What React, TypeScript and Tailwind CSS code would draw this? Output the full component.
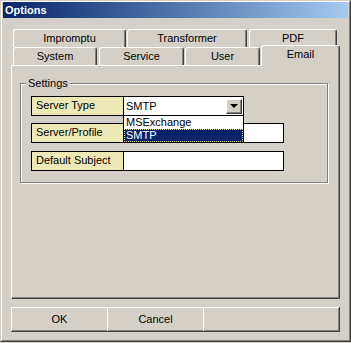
const tabBase =
  "flex items-center justify-center bg-[#d4d0c8] border-l border-t border-r border-l-white border-t-white border-r-[#404040] rounded-t-[3px] shadow-[inset_-1px_0_0_#808080] text-[11px] leading-[13px]";

const Row = ({ label, children }: { label: string; children: React.ReactNode }) => (
    <div className="flex h-[20px]">
        <div className="w-[92px] h-[20px] border-l border-t border-b border-black bg-[#ece9b6] pl-[4px] pt-[2px] text-[11px] leading-[13px]">
            {label}
        </div>
        {children}
    </div>
);

export default function App() {
    return (
        <div className="h-[343px] w-[351px] bg-[#d4d0c8] font-['Liberation_Sans',Arial,sans-serif] text-black">
            <div className="h-[342px] w-[351px] border border-t-[#d4d0c8] border-l-[#d4d0c8] border-b-[#404040] border-r-[#404040]">
                <div className="h-full w-full border border-t-white border-l-white border-b-[#808080] border-r-[#808080] px-[1px]">
                    {/* title bar */}
                    <div className="flex h-[16px] items-center bg-linear-to-r from-[#0a246a] to-[#a6caf0] pl-[2px] text-[11px] font-bold text-white">
                        Options
                    </div>

                    <div className="pl-[8px]">
                        {/* tabs back row */}
                        <div className="mt-[11px] flex pl-[2px]">
                            <div className={`${tabBase} h-[18px] w-[113px]`}>Impromptu</div>
                            <div className={`${tabBase} ml-[1px] h-[18px] w-[120px]`}>Transformer</div>
                            <div className={`${tabBase} ml-[2px] h-[18px] w-[88px]`}>PDF</div>
                        </div>
                        {/* tabs front row */}
                        <div className="-mt-[2px] flex h-[20px] items-end pl-[2px]">
                            <div className={`${tabBase} h-[18px] w-[84px]`}>System</div>
                            <div className={`${tabBase} ml-[2px] h-[18px] w-[85px]`}>Service</div>
                            <div className={`${tabBase} ml-[1px] h-[18px] w-[75px]`}>User</div>
                            <div className="relative z-10 -mb-[1px] ml-[1px] flex h-[21px] w-[79px] items-start justify-center rounded-t-[3px] border-l border-t border-r border-l-white border-t-white border-r-[#404040] bg-[#d4d0c8] pt-[2px] text-[11px] leading-[13px] shadow-[inset_-1px_0_0_#808080]">
                                Email
                            </div>
                        </div>

                        {/* tab panel */}
                        <div className="h-[234px] w-[329px] border border-l-white border-t-white border-b-[#404040] border-r-[#404040] pl-[8px] pt-[11px] shadow-[inset_-1px_-1px_0_#808080]">
                            <fieldset className="w-[308px] border border-[#808080] px-[10px] pb-[11px] pt-[6px] shadow-[inset_1px_1px_0_white,1px_1px_0_white]">
                                <legend className="ml-[-5px] bg-[#d4d0c8] px-[2px] text-[11px] leading-[13px]">Settings</legend>

                                <Row label="Server Type">
                                    <div className="relative flex h-[20px] w-[121px] items-center border border-black bg-white pl-[2px] text-[11px]">
                                        SMTP
                                        <div className="ml-auto mr-[1px] flex h-[15px] w-[16px] items-center justify-center border border-t-white border-l-white border-b-[#404040] border-r-[#404040] bg-[#d4d0c8] shadow-[inset_-1px_-1px_0_#808080]">
                                            <div className="h-0 w-0 border-l-[4px] border-r-[4px] border-t-[4px] border-l-transparent border-r-transparent border-t-black" />
                                        </div>
                                        {/* open dropdown list */}
                                        <div className="absolute left-[-1px] top-full z-20 w-[121px] border border-black bg-white">
                                            <div className="h-[13px] pl-[2px] text-[11px] leading-[13px]">MSExchange</div>
                                            <div className="h-[13px] border border-dotted border-[#d8d8a0] bg-[#0a246a] pl-[1px] text-[11px] leading-[11px] text-white">
                                                SMTP
                                            </div>
                                        </div>
                                    </div>
                                </Row>

                                <div className="mt-[7px]">
                                    <Row label="Server/Profile">
                                        <div className="h-[20px] w-[161px] border border-black bg-white" />
                                    </Row>
                                </div>

                                <div className="mt-[8px]">
                                    <Row label="Default Subject">
                                        <div className="h-[20px] w-[161px] border border-black bg-white" />
                                    </Row>
                                </div>
                            </fieldset>
                        </div>

                        {/* buttons */}
                        <div className="mt-[8px] flex h-[25px] w-[329px] border-b border-r border-[#404040] text-[11px] shadow-[inset_-1px_-1px_0_#808080]">
                            <button className="flex w-[96px] items-center justify-center border-l border-t border-white">OK</button>
                            <button className="flex w-[96px] items-center justify-center border-l border-t border-white">Cancel</button>
                            <div className="flex-1 border-l border-t border-white" />
                        </div>
                    </div>
                </div>
            </div>
        </div>
    );
}
